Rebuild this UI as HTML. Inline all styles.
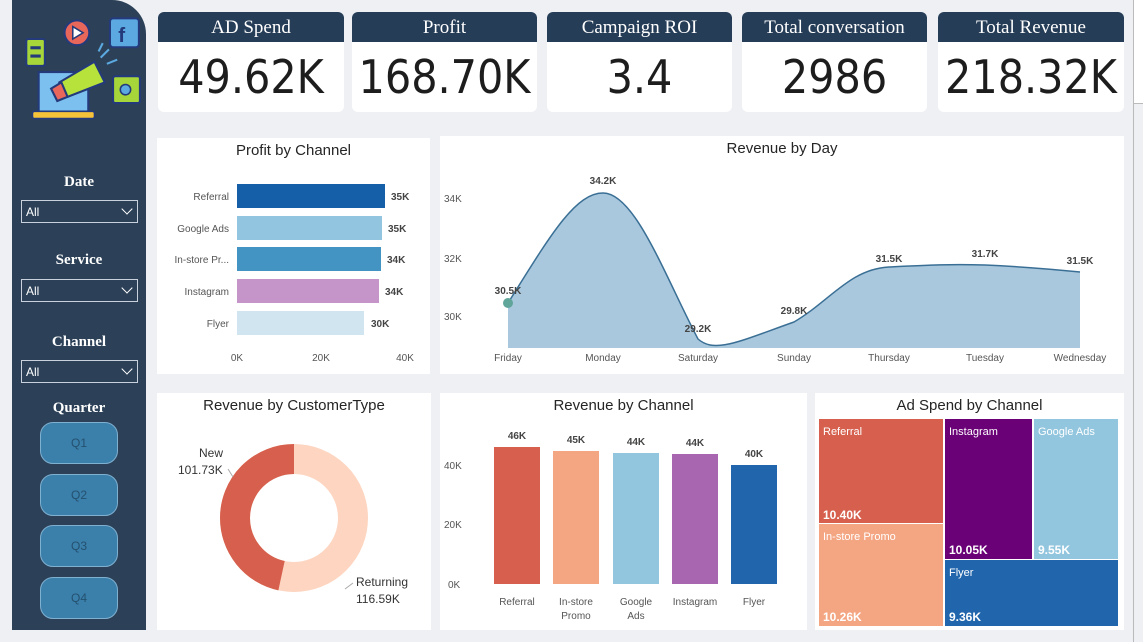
<!DOCTYPE html>
<html><head><meta charset="utf-8"><style>
*{margin:0;padding:0;box-sizing:border-box}
body{width:1143px;height:642px;background:#eef0f4;position:relative;overflow:hidden;font-family:"Liberation Sans",sans-serif}
.abs{position:absolute}
.side{left:12px;top:0;width:134px;height:630px;background:#2c4158;border-top-right-radius:34px}
.lab{position:absolute;width:134px;text-align:center;color:#fff;font-family:"Liberation Serif",serif;font-weight:bold;font-size:15px}
.dd{position:absolute;left:9px;width:117px;height:23px;border:1px solid #c9d2dc;color:#fff;font-size:12px;padding:4px 0 0 4px}
.dd:after{content:"";position:absolute;right:6px;top:4px;width:7px;height:7px;border-right:1.5px solid #fff;border-bottom:1.5px solid #fff;transform:rotate(45deg)}
.q{position:absolute;left:28px;width:78px;height:42px;border-radius:13px;background:#3b7fab;border:1px solid #7fb0d0;color:#24516f;font-size:12px;text-align:center;line-height:40px}
.card{position:absolute;top:12px;height:100px;background:#fff;border-radius:6px;overflow:hidden}
.card .h{height:30px;background:#263d57;color:#fff;font-family:"Liberation Serif",serif;font-size:19px;text-align:center;line-height:31px}
.card .v{text-align:center;font-size:46px;color:#1d1d1d;line-height:70px;font-family:"DejaVu Sans Condensed","DejaVu Sans",sans-serif}
.pan{position:absolute;background:#fff}
.t{position:absolute;width:100%;text-align:center;font-size:15px;color:#252525;top:4px}
svg text{font-family:"Liberation Sans",sans-serif}
</style></head><body>
<div class="abs side">
<svg class="abs" style="left:6px;top:8px" width="124" height="124" viewBox="0 0 120 120">
<rect x="8" y="30" width="18" height="26" rx="2" fill="#a6d63a" stroke="#243a7a" stroke-width="2"/>
<rect x="12" y="37" width="10" height="3" fill="#243a7a"/><rect x="12" y="45" width="10" height="3" fill="#243a7a"/>
<circle cx="57" cy="24" r="12" fill="#e8665a" stroke="#243a7a" stroke-width="2"/><path d="M53 18 L63 24 L53 30Z" fill="#fff" stroke="#243a7a" stroke-width="1.5"/>
<rect x="89" y="10" width="28" height="28" rx="3" fill="#5ba9e0" stroke="#243a7a" stroke-width="2"/><text x="97" y="33" font-size="20" font-weight="bold" fill="#243a7a">f</text>
<rect x="92" y="66" width="26" height="26" rx="2" fill="#a6d63a" stroke="#243a7a" stroke-width="2"/><circle cx="104" cy="79" r="5" fill="#5ba9e0" stroke="#243a7a" stroke-width="1.5"/>
<rect x="20" y="62" width="48" height="40" fill="#7cc0ef" stroke="#243a7a" stroke-width="2"/>
<rect x="14" y="100" width="60" height="7" rx="2" fill="#f5c23a" stroke="#243a7a" stroke-width="1.5"/>
<path d="M40 72 L74 52 L84 72 L48 86Z" fill="#b7e23c" stroke="#243a7a" stroke-width="2"/>
<path d="M32 78 L42 72 L48 86 L38 90Z" fill="#e8665a" stroke="#243a7a" stroke-width="2"/>
<path d="M80 48 L88 40 M86 54 L96 50 M78 42 L82 34" stroke="#5ba9e0" stroke-width="2"/>
</svg>
<div class="lab" style="top:174px">Date</div><div class="dd" style="top:200px">All</div>
<div class="lab" style="top:252px">Service</div><div class="dd" style="top:279px">All</div>
<div class="lab" style="top:334px">Channel</div><div class="dd" style="top:360px">All</div>
<div class="lab" style="top:400px">Quarter</div>
<div class="q" style="top:422px">Q1</div><div class="q" style="top:474px">Q2</div><div class="q" style="top:525px">Q3</div><div class="q" style="top:577px">Q4</div>
</div>
<div class="abs" style="left:1133px;top:0;width:1px;height:642px;background:#bbb"></div>
<div class="abs" style="left:1134px;top:0;width:9px;height:104px;background:#fff;border-bottom:1px solid #bbb"></div>

<div class="card" style="left:158px;width:186px"><div class="h">AD Spend</div><div class="v">49.62K</div></div>
<div class="card" style="left:352px;width:185px"><div class="h">Profit</div><div class="v">168.70K</div></div>
<div class="card" style="left:547px;width:185px"><div class="h">Campaign ROI</div><div class="v">3.4</div></div>
<div class="card" style="left:742px;width:185px"><div class="h">Total conversation</div><div class="v">2986</div></div>
<div class="card" style="left:938px;width:186px"><div class="h">Total Revenue</div><div class="v">218.32K</div></div>

<div class="pan" style="left:157px;top:138px;width:273px;height:236px"><div class="t">Profit by Channel</div>
<svg class="abs" style="left:0;top:0" width="273" height="236"><g font-size="10" fill="#555">
<text x="72" y="62" text-anchor="end">Referral</text><text x="72" y="94" text-anchor="end">Google Ads</text><text x="72" y="125" text-anchor="end">In-store Pr...</text><text x="72" y="157" text-anchor="end">Instagram</text><text x="72" y="189" text-anchor="end">Flyer</text>
<text x="80" y="223" text-anchor="middle">0K</text><text x="164" y="223" text-anchor="middle">20K</text><text x="248" y="223" text-anchor="middle">40K</text></g>
<rect x="80" y="46" width="148" height="24" fill="#155ea8"/><rect x="80" y="78" width="145" height="24" fill="#92c5df"/><rect x="80" y="109" width="144" height="24" fill="#4393c3"/><rect x="80" y="141" width="142" height="24" fill="#c595c9"/><rect x="80" y="173" width="127" height="24" fill="#d1e5f0"/>
<g font-size="10" font-weight="bold" fill="#444"><text x="234" y="62">35K</text><text x="231" y="94">35K</text><text x="230" y="125">34K</text><text x="228" y="157">34K</text><text x="214" y="189">30K</text></g>
</svg></div>

<div class="pan" style="left:440px;top:136px;width:684px;height:238px"><div class="t">Revenue by Day</div>
<svg class="abs" style="left:0;top:0" width="684" height="238">
<g font-size="10" fill="#555"><text x="4" y="66">34K</text><text x="4" y="126">32K</text><text x="4" y="184">30K</text>
<g text-anchor="middle"><text x="68" y="225">Friday</text><text x="163" y="225">Monday</text><text x="258" y="225">Saturday</text><text x="354" y="225">Sunday</text><text x="449" y="225">Thursday</text><text x="545" y="225">Tuesday</text><text x="640" y="225">Wednesday</text></g></g>
<path d="M68 167 C110 100 135 57 163 57 C195 57 225 140 258 203 C275 218 300 205 354 186 C390 165 410 133 449 131 C490 129 510 128 545 129 C590 131 620 134 640 136 L640 212 L68 212Z" fill="#aac8dd"/>
<path d="M68 167 C110 100 135 57 163 57 C195 57 225 140 258 203 C275 218 300 205 354 186 C390 165 410 133 449 131 C490 129 510 128 545 129 C590 131 620 134 640 136" fill="none" stroke="#3a6f95" stroke-width="1.5"/>
<circle cx="68" cy="167" r="5" fill="#5fa59a"/>
<g font-size="10" font-weight="bold" fill="#444" text-anchor="middle"><text x="68" y="158">30.5K</text><text x="163" y="48">34.2K</text><text x="258" y="196">29.2K</text><text x="354" y="178">29.8K</text><text x="449" y="126">31.5K</text><text x="545" y="121">31.7K</text><text x="640" y="128">31.5K</text></g>
</svg></div>

<div class="pan" style="left:157px;top:393px;width:274px;height:237px"><div class="t">Revenue by CustomerType</div>
<svg class="abs" style="left:0;top:0" width="274" height="237">
<circle cx="137" cy="125" r="59" fill="none" stroke="#fdd5c0" stroke-width="30"/>
<circle cx="137" cy="125" r="59" fill="none" stroke="#d6604d" stroke-width="30" stroke-dasharray="172.7 400" transform="rotate(-90 137 125) scale(1,-1) translate(0,-250)" />
<g font-size="12" fill="#333"><text x="42" y="64">New</text><text x="21" y="81">101.73K</text><text x="199" y="193">Returning</text><text x="199" y="210">116.59K</text></g>
<path d="M71 76 L76 84" stroke="#aaa" fill="none"/><path d="M188 196 L196 190" stroke="#aaa" fill="none"/>
</svg></div>

<div class="pan" style="left:440px;top:393px;width:367px;height:237px"><div class="t">Revenue by Channel</div>
<svg class="abs" style="left:0;top:0" width="367" height="237">
<g font-size="10" fill="#555"><text x="4" y="76">40K</text><text x="4" y="135">20K</text><text x="8" y="195">0K</text>
<g text-anchor="middle"><text x="77" y="212">Referral</text><text x="136" y="212">In-store</text><text x="136" y="226">Promo</text><text x="196" y="212">Google</text><text x="196" y="226">Ads</text><text x="255" y="212">Instagram</text><text x="314" y="212">Flyer</text></g></g>
<rect x="54" y="54" width="46" height="137" fill="#d6604d"/><rect x="113" y="58" width="46" height="133" fill="#f4a582"/><rect x="173" y="60" width="46" height="131" fill="#92c5de"/><rect x="232" y="61" width="46" height="130" fill="#a865b0"/><rect x="291" y="72" width="46" height="119" fill="#2166ac"/>
<g font-size="10" font-weight="bold" fill="#444" text-anchor="middle"><text x="77" y="46">46K</text><text x="136" y="50">45K</text><text x="196" y="52">44K</text><text x="255" y="53">44K</text><text x="314" y="64">40K</text></g>
</svg></div>

<div class="pan" style="left:815px;top:393px;width:309px;height:237px"><div class="t">Ad Spend by Channel</div>
<svg class="abs" style="left:0;top:0" width="309" height="237" font-size="11" fill="#fff">
<rect x="4" y="26" width="124" height="104" fill="#d6604d"/><rect x="4" y="131" width="124" height="102" fill="#f4a582"/>
<rect x="130" y="26" width="87" height="140" fill="#6a0177"/><rect x="219" y="26" width="84" height="140" fill="#92c5de"/><rect x="130" y="167" width="173" height="66" fill="#2166ac"/>
<text x="8" y="42">Referral</text><text x="8" y="147">In-store Promo</text><text x="134" y="42">Instagram</text><text x="223" y="42">Google Ads</text><text x="134" y="183">Flyer</text>
<g font-weight="bold" font-size="12"><text x="8" y="126">10.40K</text><text x="8" y="228">10.26K</text><text x="134" y="161">10.05K</text><text x="223" y="161">9.55K</text><text x="134" y="228">9.36K</text></g>
</svg></div>
</body></html>
